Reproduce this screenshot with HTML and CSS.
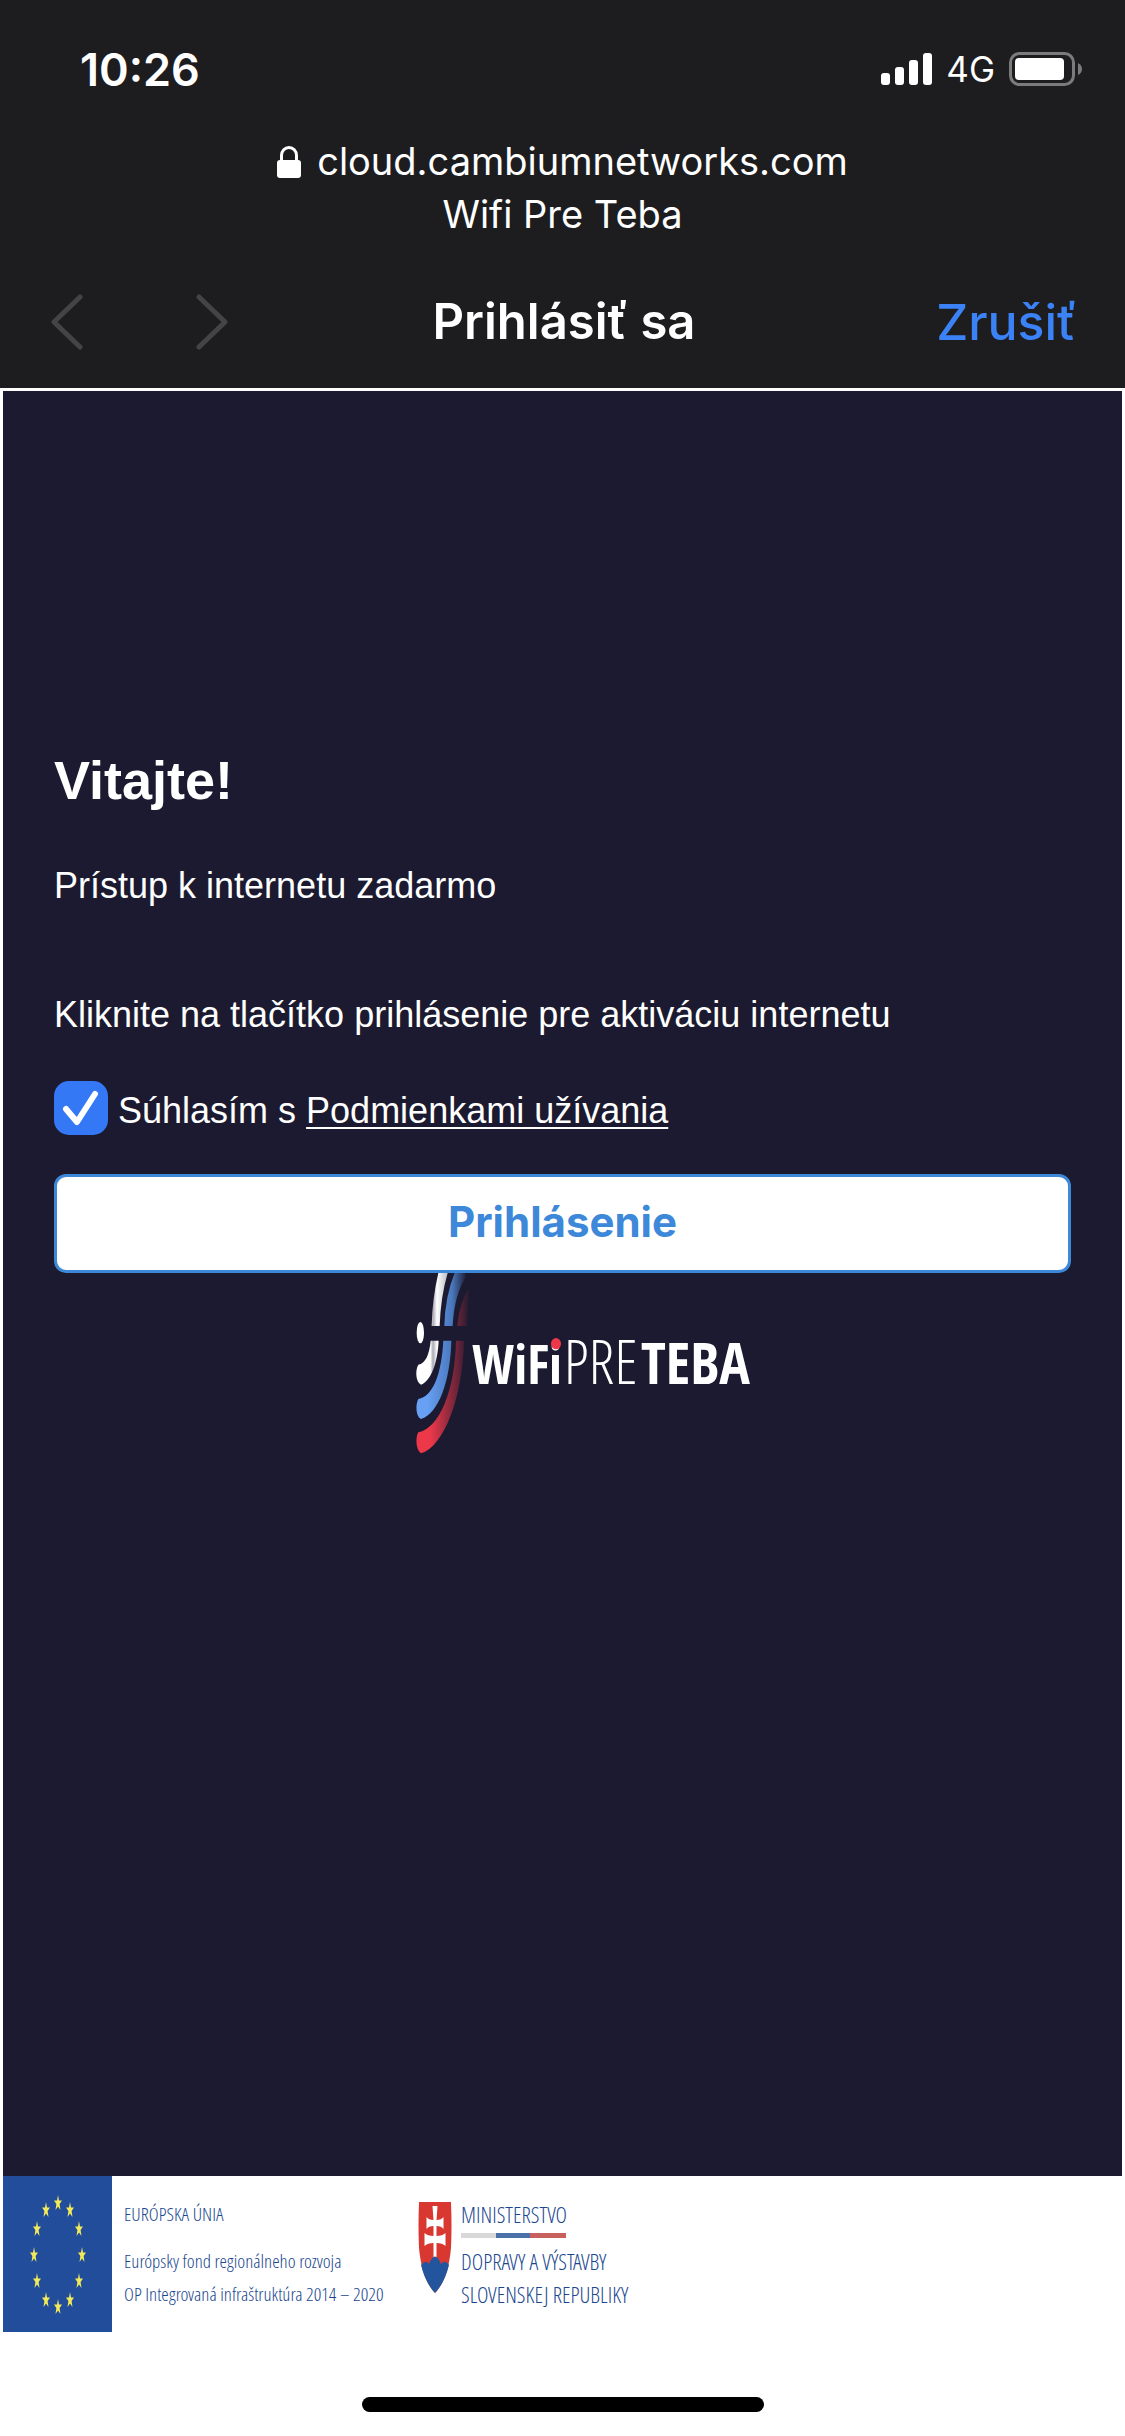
FILE: index.html
```html
<!DOCTYPE html>
<html lang="sk">
    <head>
        <meta charset="utf-8">
        <title>Wifi Pre Teba - Prihlásiť sa</title>
        <meta name="viewport" content="width=device-width">
        <link rel="stylesheet" href="styles.css">
    </head>

    <body>
        <header class="browser">
            <div class="status">
                <span class="time">10:26</span>
                <div class="indicators">
                    <svg width="51" height="32" viewBox="0 0 51 32" fill="#fff">
                        <rect x="0" y="20" width="9" height="12" rx="3"/>
                        <rect x="14" y="14" width="9" height="18" rx="3"/>
                        <rect x="28" y="7" width="9" height="25" rx="3"/>
                        <rect x="42" y="0" width="9" height="32" rx="3"/>
                    </svg>
                    <span class="network">4G</span>
                    <svg width="73" height="34" viewBox="0 0 73 34">
                        <rect x="1.5" y="1.5" width="63" height="31" rx="9" fill="none" stroke="#7b7b7c" stroke-width="3"/>
                        <rect x="6" y="6" width="49" height="22" rx="4" fill="#fff"/>
                        <path d="M69 11q4 2 4 6t-4 6z" fill="#7b7b7c"/>
                    </svg>
                </div>
            </div>

            <div class="address">
                <div class="url">
                    <svg width="24" height="32" viewBox="0 0 24 32">
                        <path d="M4.500 15V9.500a7.500 8 0 0 1 15 0V15" fill="none" stroke="#fff" stroke-width="3"/>
                        <rect x="0" y="14" width="24" height="18" rx="3" fill="#fff"/>
                    </svg>
                    <span>cloud.cambiumnetworks.com</span>
                </div>
                <div>Wifi Pre Teba</div>
            </div>

            <nav class="toolbar">
                <div class="history">
                    <button type="button" class="arrow" aria-label="Späť" disabled>
                        <svg width="32" height="56" viewBox="0 0 32 56"><path d="M29 3L3 28l26 25"/></svg>
                    </button>
                    <button type="button" class="arrow" aria-label="Dopredu" disabled>
                        <svg width="32" height="56" viewBox="0 0 32 56"><path d="M3 3l26 25L3 53"/></svg>
                    </button>
                </div>
                <span class="title">Prihlásiť sa</span>
                <button type="button" class="cancel">Zrušiť</button>
            </nav>
        </header>

        <main class="portal">
            <h1>Vitajte!</h1>
            <p>Prístup k internetu zadarmo</p>
            <p class="hint">Kliknite na tlačítko prihlásenie pre aktiváciu internetu</p>

            <div class="terms">
                <input type="checkbox" id="agree" name="agree" checked>
                <label for="agree">Súhlasím s <a href="#podmienky">Podmienkami užívania</a></label>
            </div>

            <button type="submit" class="login">Prihlásenie</button>

            <svg class="logo" width="376" height="184" viewBox="-46 69 1128 552">
                <defs>
                    <linearGradient id="white" gradientUnits="userSpaceOnUse" x1="80" y1="0" x2="180" y2="0">
                        <stop offset="0.400" stop-color="#fff"/>
                        <stop offset="0.480" stop-color="#aaaab4"/>
                        <stop offset="0.600" stop-color="#fff"/>
                        <stop offset="1" stop-color="#aaaab4"/>
                    </linearGradient>
                    <linearGradient id="blue" gradientUnits="userSpaceOnUse" x1="80" y1="0" x2="230" y2="0">
                        <stop offset="0.200" stop-color="#68a0f4"/>
                        <stop offset="0.700" stop-color="#4a78bd"/>
                        <stop offset="1" stop-color="#1b1a30"/>
                    </linearGradient>
                    <linearGradient id="red" gradientUnits="userSpaceOnUse" x1="80" y1="0" x2="240" y2="0">
                        <stop offset="0.250" stop-color="#ec3849"/>
                        <stop offset="0.750" stop-color="#6b2439"/>
                        <stop offset="1" stop-color="#1b1a30"/>
                    </linearGradient>
                </defs>
                <ellipse cx="90" cy="248" rx="11" ry="32" fill="#fff"/>
                <path d="M144 69h28Q151 140 148 228h-24Q126 145 144 69z" fill="url(#white)"/>
                <path d="M121 272h24C142 340 121 393 92 404C76 396 74 360 84 344C105 340 117 315 121 272z" fill="url(#white)"/>
                <path d="M193 69h42Q192 125 187 228h-25Q164 140 193 69z" fill="url(#blue)"/>
                <path d="M159 272h24C180 393 145 490 92 507C76 500 75 462 84 447C127 439 153 376 159 272z" fill="url(#blue)"/>
                <path d="M237 112L230 228h-29Q207 158 237 112z" fill="url(#red)"/>
                <path d="M197 272h24C218 442 160 590 92 610C76 600 75 560 84 547C148 534 194 420 197 272z" fill="url(#red)"/>
                <text class="mark" x="245" y="402">WiFi</text>
                <text class="mark light" x="520" y="402">PRE</text>
                <text class="mark large" x="752" y="402">TEBA</text>
                <ellipse cx="497" cy="281" rx="15" ry="17" fill="#ec3849"/>
            </svg>
        </main>

        <footer class="partners">
            <svg class="flag" width="109" height="156" viewBox="0 0 109 156">
                <defs>
                    <path id="star" fill="#f3ea5a" d="M0-8L1-2.500H4L1.600 1L2.500 7L0 3.500L-2.500 7L-1.600 1L-4-2.500H-1z"/>
                </defs>
                <rect width="109" height="156" fill="#214d9b"/>
                <use href="#star" x="55" y="27"/>
                <use href="#star" x="67" y="34"/>
                <use href="#star" x="76" y="53"/>
                <use href="#star" x="79" y="79"/>
                <use href="#star" x="76" y="105"/>
                <use href="#star" x="67" y="124"/>
                <use href="#star" x="55" y="131"/>
                <use href="#star" x="43" y="124"/>
                <use href="#star" x="34" y="105"/>
                <use href="#star" x="31" y="79"/>
                <use href="#star" x="34" y="53"/>
                <use href="#star" x="43" y="34"/>
            </svg>
            <div class="partner eu">
                <span class="name">EURÓPSKA ÚNIA</span>
                <span>Európsky fond regionálneho rozvoja</span>
                <span>OP Integrovaná infraštruktúra 2014 – 2020</span>
            </div>
            <svg class="shield" width="34" height="91" viewBox="0 0 34 91">
                <path d="M1 0h32q1 25 0 46Q30 78 17 91Q4 78 1 46Q0 25 1 0z" fill="#d93831"/>
                <path d="M14.500 4h5l-1 14q5 0 7-3v12q-2-3-7-3v10q6 0 9-3v13q-3-3-9-3v17h-3V41q-6 0-9 3V31q3 3 9 3V24q-5 0-7 3V15q2 3 7 3z" fill="#fff"/>
                <path d="M3 63Q8 57 11 62Q17 47 23 62Q27 57 31 63Q27 80 17 91Q7 80 3 63z" fill="#22559e"/>
            </svg>
            <div class="partner ministry">
                <span class="name">MINISTERSTVO</span>
                <span class="tricolor"></span>
                <span>DOPRAVY A VÝSTAVBY</span>
                <span>SLOVENSKEJ REPUBLIKY</span>
            </div>
        </footer>

        <div class="home"></div>
    </body>
</html>
```

FILE: styles.css
```css
* {
  box-sizing: border-box;
}
body {
  margin: 0;
  min-height: 100vh;
  display: flex;
  flex-direction: column;
  background-color: #fff;
  font-family: "Liberation Sans", Arial, sans-serif;
}
svg {
  display: block;
  flex: none;
}
button {
  font-family: Inter, Helvetica, sans-serif;
  cursor: pointer;
}

/* Phone status bar and browser toolbar */
.browser {
  background-color: #1d1d1f;
  color: #fff;
  font-family: Inter, Helvetica, sans-serif;
  padding-top: 44px;
}
.status {
  display: flex;
  align-items: center;
  justify-content: space-between;
  height: 50px;
  padding: 0 43px 0 80px;
}
.time {
  font-size: 45px;
  font-weight: 600;
}
.indicators {
  display: flex;
  align-items: center;
  gap: 14px;
}
.network {
  font-size: 35px;
  line-height: 36px;
}
.address {
  padding-top: 41px;
  font-size: 38px;
  line-height: 53px;
  text-align: center;
}
.url {
  display: flex;
  align-items: center;
  justify-content: center;
  gap: 16px;
}
.toolbar {
  display: grid;
  grid-template-columns: 1fr auto 1fr;
  align-items: center;
  height: 147px;
  padding: 14px 48px 0 51px;
}
.history {
  display: flex;
  gap: 113px;
}
.arrow {
  padding: 0;
  border: none;
  background: none;
}
.arrow path {
  fill: none;
  stroke: #444445;
  stroke-width: 5;
  stroke-linecap: round;
  stroke-linejoin: round;
}
.title {
  font-size: 49px;
  font-weight: 600;
}
.cancel {
  justify-self: end;
  padding: 0;
  border: none;
  background: none;
  color: #3c82f7;
  font-size: 50px;
  font-weight: 500;
}

/* Captive portal page */
.portal {
  flex: 1;
  margin: 3px 3px 0;
  padding: 357px 51px 0;
  background-color: #1b1a30;
  color: #fff;
  font-size: 36px;
  line-height: 42px;
}
h1 {
  margin: 0 0 53px;
  font-size: 54px;
  line-height: 64px;
}
p {
  margin: 0;
}
.hint {
  margin-top: 87px;
}
.terms {
  display: flex;
  align-items: center;
  gap: 10px;
  margin: 45px 0 39px;
}
.terms input {
  appearance: none;
  flex: none;
  width: 54px;
  height: 54px;
  margin: 0;
  border-radius: 15px;
  background: #3478f6 url("data:image/svg+xml,%3Csvg xmlns='http://www.w3.org/2000/svg' viewBox='0 0 54 54'%3E%3Cpath d='M12 28l11 13L41 13' fill='none' stroke='white' stroke-width='6' stroke-linecap='round' stroke-linejoin='round'/%3E%3C/svg%3E");
}
.terms label {
  padding-top: 6px;
}
.terms a {
  color: #fff;
  text-decoration-thickness: 2px;
  text-underline-offset: 4px;
}
.login {
  display: block;
  width: 100%;
  height: 99px;
  padding: 0 0 4px;
  border: 3px solid #3d88d8;
  border-radius: 12px;
  background-color: #fff;
  color: #3d88d8;
  font-size: 42px;
  font-weight: 700;
}
.logo {
  margin: 0 auto;
}
.mark {
  fill: #fff;
  font-family: "Open Sans Condensed", "Liberation Sans", sans-serif;
  font-size: 160px;
  font-weight: 700;
}
.light {
  font-family: "Open Sans Condensed Light", "Open Sans Condensed", sans-serif;
  font-size: 182px;
  font-weight: 300;
}
.large {
  font-size: 172px;
}

/* Partner logos */
.partners {
  display: flex;
  align-items: flex-start;
  margin: 0 3px;
  color: #1a478f;
}
.partner {
  display: flex;
  flex-direction: column;
  padding-top: 22px;
  font-family: "Open Sans Condensed Light", "Open Sans Condensed", "Liberation Sans", sans-serif;
  font-size: 19px;
  font-weight: 300;
  line-height: 33px;
  white-space: nowrap;
}
.eu {
  width: 306px;
  padding-left: 12px;
}
.name {
  margin-bottom: 14px;
}
.shield {
  margin-top: 26px;
}
.ministry {
  padding-left: 9px;
  font-size: 22px;
}
.ministry .name {
  margin-bottom: 2px;
}
.tricolor {
  width: 105px;
  height: 5px;
  margin-bottom: 7px;
  background: linear-gradient(to right, #d8d8d8 33%, #4b72a8 33% 66%, #c8605e 66%);
}

.home {
  width: 402px;
  height: 15px;
  margin: 65px auto 24px;
  border-radius: 8px;
  background-color: #000;
}
```
